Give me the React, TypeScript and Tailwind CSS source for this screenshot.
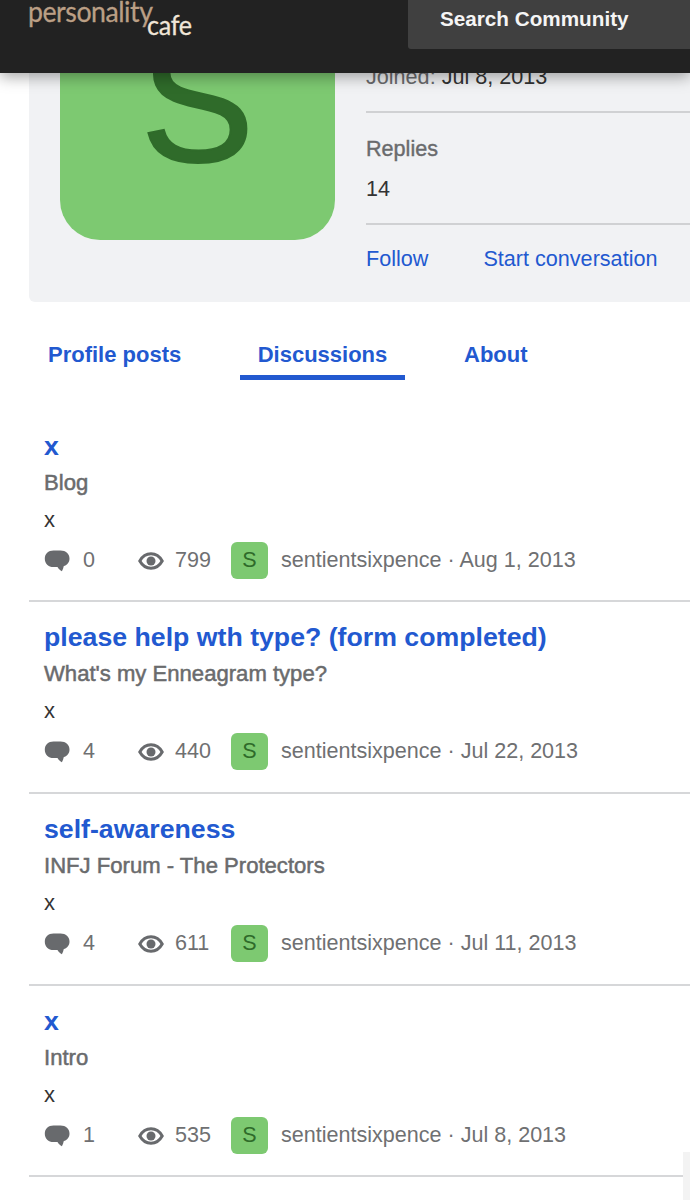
import React from 'react';

const FONT = { sans: "font-['Liberation_Sans',Arial,sans-serif]" };

const DISCUSSIONS = [
  { title: 'x', forum: 'Blog', replies: 0, views: 799, date: 'Aug 1, 2013' },
  { title: 'please help wth type? (form completed)', forum: "What's my Enneagram type?", replies: 4, views: 440, date: 'Jul 22, 2013' },
  { title: 'self-awareness', forum: 'INFJ Forum - The Protectors', replies: 4, views: 611, date: 'Jul 11, 2013' },
  { title: 'x', forum: 'Intro', replies: 1, views: 535, date: 'Jul 8, 2013' },
];

const ChatIcon = () => (
  <svg viewBox="0 0 26 24" className="w-[26px] h-[24px] fill-[#686a6d]">
    <path d="M9.500 1.500h7C21.800 1.500 25.500 4.800 25.500 9.500c0 3.800-2.200 6.600-5.700 7.600-.4 1.900-1 3.500-1.900 5.100-1.700-.8-3.200-2.100-4.400-4.200H9.500C4.300 18 .8 14.500.8 9.700.8 4.800 4.300 1.500 9.500 1.500z" />
  </svg>
);

const EyeIcon = () => (
  <svg viewBox="0 0 26 18" className="w-[26px] h-[18px]">
    <path d="M1.800 9C4.400 4.300 8.400 1.800 13 1.800S21.600 4.300 24.200 9C21.600 13.700 17.600 16.200 13 16.200S4.400 13.700 1.800 9z" fill="none" stroke="#686a6d" strokeWidth="3" />
    <circle cx="13" cy="9" r="4.500" fill="#686a6d" />
  </svg>
);

const DiscussionRow = ({ title, forum, replies, views, date }: (typeof DISCUSSIONS)[number]) => (
  <div className="h-[192px] last:h-[191px] border-b-2 border-[#d6d7d9] pl-[15px] pt-[17px] first:pt-[18px]">
    <a className="block h-[36px] text-[26.7px] leading-[37px] font-bold text-[#2259d0]">{title}</a>
    <div className="h-[37px] text-[22.1px] leading-[37px] text-[#6a6b6d] [-webkit-text-stroke:0.5px_#6a6b6d]">{forum}</div>
    <div className="h-[37px] text-[22px] leading-[37px] text-[#333]">x</div>
    <div className="mt-[4px] flex items-center h-[37px] text-[21.55px] text-[#6f7072]">
      <ChatIcon />
      <span className="ml-[13px] w-[55px]">{replies}</span>
      <EyeIcon />
      <span className="ml-[11px] w-[56px]">{views}</span>
      <span className="w-[37px] h-[37px] rounded-[6px] bg-[#7dc971] text-[#2f6b2a] flex items-center justify-center">S</span>
      <span className="ml-[13px] whitespace-nowrap">sentientsixpence · {date}</span>
    </div>
  </div>
);

export default function App() {
  return (
    <div className={`relative h-[1200px] w-[690px] overflow-hidden bg-white ${FONT.sans}`}>
      <header className="relative z-10 h-[73px] bg-[#222222] shadow-[0_4px_14px_rgba(0,0,0,0.35)] flex items-start justify-between">
        <div className="ml-[28px] flex items-start font-['Lato',sans-serif] whitespace-nowrap">
          <span className="block origin-left scale-x-[0.92] mr-[-16px] text-[29px] leading-[22px] text-[#bb9f85] tracking-[-0.5px] [-webkit-text-stroke:0.3px_#bb9f85]">personality</span>
          <span className="block mt-[11px] origin-left scale-x-[0.93] text-[27px] leading-none text-[#f0e6d8] tracking-[-0.3px] [-webkit-text-stroke:0.3px_#f0e6d8]">cafe</span>
        </div>
        <div className="w-[282px] h-[49px] bg-[#404040] rounded-bl-[3px] pl-[32px] text-[20.7px] leading-[38px] font-bold text-[#f5f5f5]">
          Search Community
        </div>
      </header>

      <section className="ml-[29px] h-[229px] bg-[#f1f2f4] rounded-bl-[6px] flex pl-[31px]">
        <div className="mt-[-108px] w-[275px] h-[275px] shrink-0 rounded-[40px] bg-[#7dc971] text-[#2f6b2a] text-[170px] leading-[275px] text-center [-webkit-text-stroke:2px_#2f6b2a]">
          S
        </div>
        <div className="ml-[31px] flex-1 text-[21.6px]">
          <div className="mt-[-12px] h-[52px] border-b-2 border-[#d0d1d3] leading-[32px] text-[#333]">
            <span className="text-[#6a6b6d]">Joined:</span> Jul 8, 2013
          </div>
          <div className="h-[112px] border-b-2 border-[#d0d1d3]">
            <div className="pt-[20px] leading-[32px] text-[#6a6b6d] [-webkit-text-stroke:0.4px_#6a6b6d]">Replies</div>
            <div className="pt-[8px] leading-[32px] text-[#333]">14</div>
          </div>
          <div className="flex gap-[55px] pt-[18px] leading-[32px] text-[#2259d0]">
            <a>Follow</a>
            <a>Start conversation</a>
          </div>
        </div>
      </section>

      <nav className="ml-[29px] mt-[35px] h-[43px] flex text-[22px] font-bold text-[#2259d0]">
        <a className="pl-[19px] w-[211px] leading-[36px]">Profile posts</a>
        <a className="w-[165px] h-[43px] border-b-[5px] border-[#2259d0] text-center leading-[36px]">Discussions</a>
        <a className="ml-[59px] leading-[36px]">About</a>
      </nav>

      <main className="ml-[29px] mt-[30px]">
        {DISCUSSIONS.map((d, i) => (
          <DiscussionRow key={i} {...d} />
        ))}
      </main>

      <div className="absolute right-0 top-[1152px] w-[7px] h-[48px] bg-[#f3f3f3]" />
    </div>
  );
}
